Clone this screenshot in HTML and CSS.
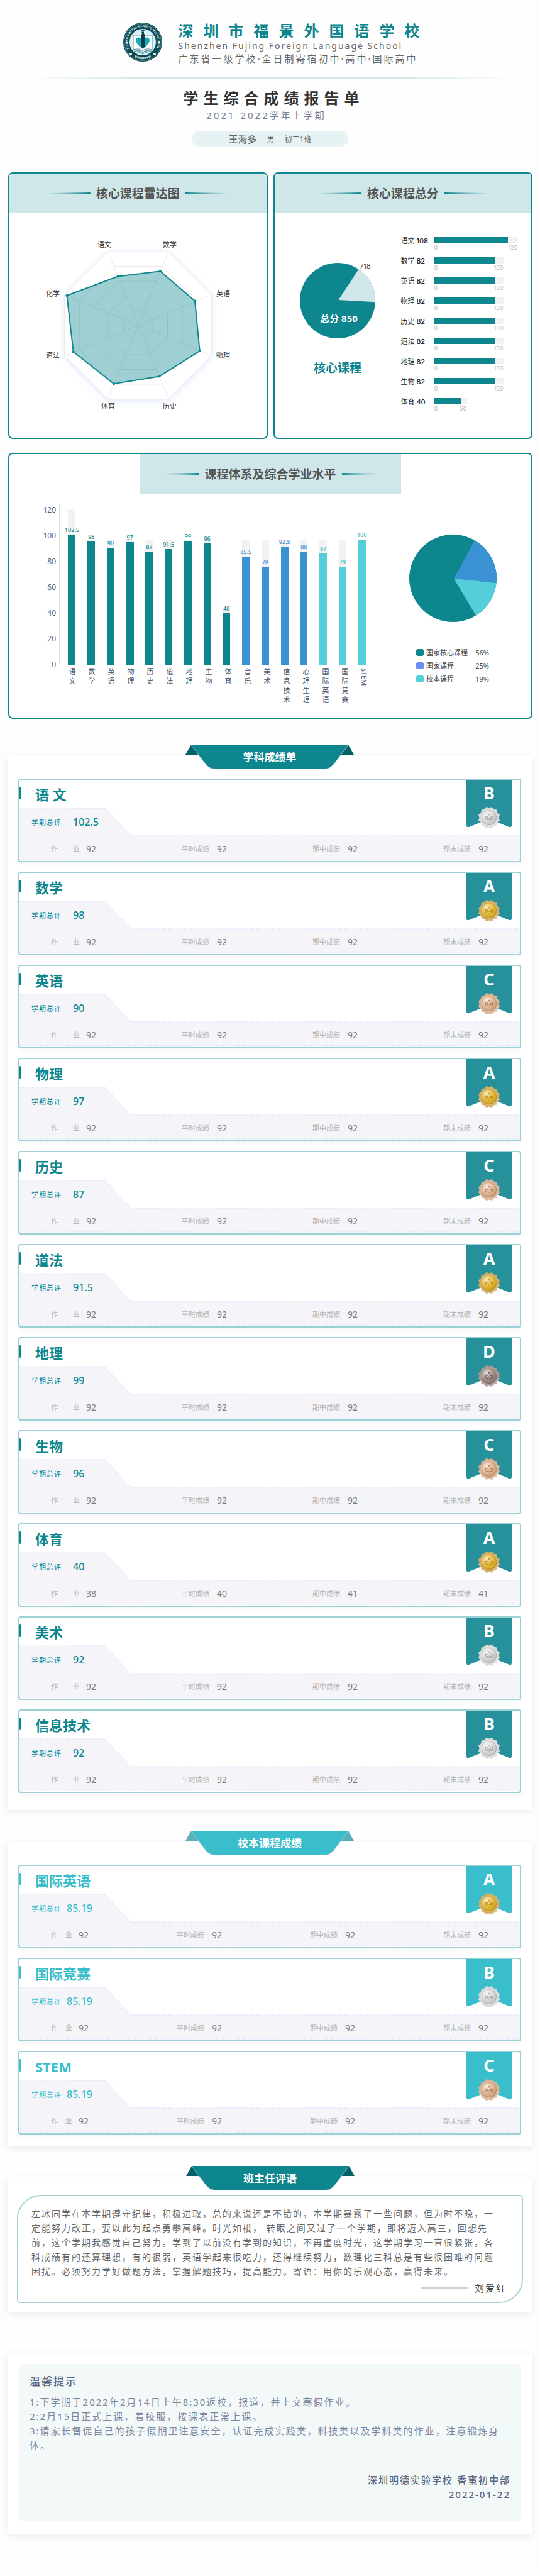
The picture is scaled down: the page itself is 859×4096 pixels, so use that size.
FILE: index.html
```html
<!DOCTYPE html>
<html lang="zh-CN">
<head>
<meta charset="utf-8">
<meta name="viewport" content="width=device-width, initial-scale=1">
<title>学生综合成绩报告单</title>
<link rel="stylesheet" href="styles.css">
</head>
<body>
<svg class="defs" width="0" height="0" aria-hidden="true">
  <defs>
    <radialGradient id="shine" cx="35%" cy="30%" r="80%">
      <stop offset="0" stop-color="#fff" stop-opacity=".75"/>
      <stop offset=".5" stop-color="#fff" stop-opacity=".15"/>
      <stop offset="1" stop-color="#000" stop-opacity=".12"/>
    </radialGradient>
    <linearGradient id="sheen" x1="0" y1="0" x2="1" y2="1">
      <stop offset="0" stop-color="#fff" stop-opacity=".1"/>
      <stop offset=".75" stop-color="#fff" stop-opacity=".15"/>
      <stop offset="1" stop-color="#fff" stop-opacity=".65"/>
    </linearGradient>
    <symbol id="ribbon" viewBox="0 0 268 40">
      <path class="ribbon-fold" d="M9 0 0 16h22zM259 0l9 16h-22z"/>
      <path class="ribbon-edge" d="M9 1 30 29Q37 39 46 39H222Q231 39 238 29L259 1z"/>
      <path class="ribbon-main" d="M9 0H259L238 28Q231 38 222 38H46Q37 38 30 28z"/>
    </symbol>
    <symbol id="flag" viewBox="0 0 72 78">
      <path class="flag-body" d="M0 0H72V72Q72 76 68 75L36 62 4 75Q0 76 0 72z"/>
    </symbol>
    <symbol id="shelf">
      <path class="s-fill" d="M0 1H136L177 45V83H0z"/>
      <rect class="s-fill" y="45" x="176" width="100%" height="38"/>
      <path class="s-dash" d="M0 1H136L177 45"/>
      <line class="s-dash" x1="177" y1="45" x2="100%" y2="45"/>
      <line class="s-dash" x1="0" y1="83" x2="100%" y2="83"/>
    </symbol>
    <symbol id="medal" viewBox="-18 -18 36 36">
      <path class="medal-rim" d="M4.500-17 7.500-13.500 12-12.500 13-7.500 17-4.500 15.400 0 17 4.500 13 7.500 12 12.500 7.500 13.500 4.500 17 0 15.400-4.500 17-7.500 13.500-12 12.500-13 7.500-17 4.500-15.400 0-17-4.500-13-7.500-12-12.500-7.500-13.500-4.500-17 0-15.400z"/>
      <path fill="url(#sheen)" d="M4.500-17 7.500-13.500 12-12.500 13-7.500 17-4.500 15.400 0 17 4.500 13 7.500 12 12.500 7.500 13.500 4.500 17 0 15.400-4.500 17-7.500 13.500-12 12.500-13 7.500-17 4.500-15.400 0-17-4.500-13-7.500-12-12.500-7.500-13.500-4.500-17 0-15.400z"/>
      <circle class="medal-ring" r="12"/>
      <circle class="medal-face" r="11"/>
      <circle fill="url(#shine)" r="12"/>
      <path class="medal-crown" d="M-6-2-3 0 0-6 3 0 6-2 5 3Q0 5-5 3zM-4 2Q0 0 4 2"/>
    </symbol>
  </defs>
</svg>

<main class="page">
  <header class="head">
    <div class="school">
      <svg class="logo" viewBox="0 0 62 62" role="img" aria-label="校徽">
        <circle cx="31" cy="31" r="31" fill="#0b4a53"/>
        <circle cx="31" cy="31" r="29.500" fill="none" stroke="#7fb4ba" stroke-width=".6"/>
        <circle cx="31" cy="31" r="21" fill="#d9f1fa"/>
        <path d="M16 20H46V44Q37 43 31 47Q25 43 16 44z" fill="#fff" stroke="#3f7f88" stroke-width=".8"/>
        <path d="M31 42Q19 33 20 27Q22 21 31 25Q40 21 42 27Q43 33 31 42z" fill="#15abb8"/>
        <path d="M16 43Q26 40 31 45Q36 40 46 43M17 46Q26 43 31 48Q36 43 45 46M20 49Q27 46 31 50Q35 46 42 49" fill="none" stroke="#4d8c95" stroke-width="1"/>
        <path d="M28 12 31 10.500 35 12 31 13.500zM29 14.500h4v3l2 3-1 4 1 13-4 4-3-4 1-13-1-4 2-3z" fill="#0a3f48"/>
        <path id="arc-top" d="M14 48A24 24 0 1 1 48 48" fill="none"/>
        <path id="arc-low" d="M14 52A27 27 0 0 0 48 52" fill="none"/>
        <text class="logo-en"><textPath href="#arc-top" startOffset="50%">FUJING FOREIGN LANGUAGE SCHOOL</textPath></text>
        <text class="logo-cn"><textPath href="#arc-low" startOffset="50%">福景外国语学校</textPath></text>
        <circle cx="12" cy="50" r="2" fill="#e8f6f8"/><circle cx="50" cy="50" r="2" fill="#e8f6f8"/>
      </svg>
      <div class="school-text">
        <p class="school-name">深圳市福景外国语学校</p>
        <p class="school-en">Shenzhen Fujing Foreign Language School</p>
        <p class="school-sub">广东省一级学校·全日制寄宿初中·高中·国际高中</p>
      </div>
    </div>
    <hr class="rule">
    <h1 class="title">学生综合成绩报告单</h1>
    <p class="term">2021-2022学年上学期</p>
    <p class="student"><strong>王海多</strong><span>男</span><span>初二1班</span></p>
  </header>

  <div class="pair">
    <section class="card">
      <h2 class="card-head">核心课程雷达图</h2>
      <svg class="radar" viewBox="0 0 408 357" role="img" aria-label="核心课程雷达图">
        <g transform="translate(204.700 178.300)">
          <polygon class="glow" points="-48,-117 48,-117 117,-48 117,48 48,117 -48,117 -117,48 -117,-48"/>
          <g class="web">
            <polygon points="-48.300,-117 48.300,-117 117,-48.300 117,48.300 48.300,117 -48.300,117 -117,48.300 -117,-48.300"/>
            <polygon points="-38.600,-93.600 38.600,-93.600 93.600,-38.600 93.600,38.600 38.600,93.600 -38.600,93.600 -93.600,38.600 -93.600,-38.600"/>
            <polygon points="-29,-70.200 29,-70.200 70.200,-29 70.200,29 29,70.200 -29,70.200 -70.200,29 -70.200,-29"/>
            <polygon points="-19.300,-46.800 19.300,-46.800 46.800,-19.300 46.800,19.300 19.300,46.800 -19.300,46.800 -46.800,19.300 -46.800,-19.300"/>
            <polygon points="-9.700,-23.400 9.700,-23.400 23.400,-9.700 23.400,9.700 9.700,23.400 -9.700,23.400 -23.400,9.700 -23.400,-9.700"/>
            <path d="M-48.300-117 48.300 117M48.300-117-48.300 117M-117-48.300 117 48.300M-117 48.300 117-48.300"/>
          </g>
          <polygon class="score-area" points="-32.300,-77.700 35.300,-86 90.300,-38.700 98,40.700 33.700,81.300 -38.700,93 -103,42 -113.300,-47.300"/>
          <g class="dots"><circle cx="-32.300" cy="-77.700" r="2"/><circle cx="35.300" cy="-86" r="2"/><circle cx="90.300" cy="-38.700" r="2"/><circle cx="98" cy="40.700" r="2"/><circle cx="33.700" cy="81.300" r="2"/><circle cx="-38.700" cy="93" r="2"/><circle cx="-103" cy="42" r="2"/><circle cx="-113.300" cy="-47.300" r="2"/></g>
        </g>
        <g class="radar-text">
          <text x="151" y="54">语文</text><text x="255" y="54">数学</text>
          <text x="340" y="132">英语</text><text x="340" y="230">物理</text>
          <text x="255" y="311">历史</text><text x="157" y="311">体育</text>
          <text x="69" y="230">道法</text><text x="69" y="132">化学</text>
        </g>
      </svg>
    </section>

    <section class="card">
      <h2 class="card-head">核心课程总分</h2>
      <div class="total">
        <div class="total-pie">
          <svg class="pie-small" viewBox="0 0 120 120" role="img" aria-label="总分 850">
            <circle cx="60" cy="60" r="60" fill="#0e868e"/>
            <path d="M61.500 59 93.500 10A60 60 0 0 1 120 62.300z" fill="#d0e7e9"/>
            <text class="pie-out" x="104" y="9">718</text>
            <text class="pie-in" x="62" y="94">总分 850</text>
          </svg>
          <p class="pie-name">核心课程</p>
        </div>
        <ul class="scores">
          <li><span class="s-name">语文 <b>108</b></span><div class="s-bar" style="width:133px"><i style="width:88%"></i><small>0</small><small>120</small></div></li>
          <li><span class="s-name">数学 <b>82</b></span><div class="s-bar" style="width:110px"><i style="width:89%"></i><small>0</small><small>100</small></div></li>
          <li><span class="s-name">英语 <b>82</b></span><div class="s-bar" style="width:110px"><i style="width:89%"></i><small>0</small><small>100</small></div></li>
          <li><span class="s-name">物理 <b>82</b></span><div class="s-bar" style="width:110px"><i style="width:89%"></i><small>0</small><small>100</small></div></li>
          <li><span class="s-name">历史 <b>82</b></span><div class="s-bar" style="width:110px"><i style="width:89%"></i><small>0</small><small>100</small></div></li>
          <li><span class="s-name">道法 <b>82</b></span><div class="s-bar" style="width:110px"><i style="width:89%"></i><small>0</small><small>100</small></div></li>
          <li><span class="s-name">地理 <b>82</b></span><div class="s-bar" style="width:110px"><i style="width:89%"></i><small>0</small><small>100</small></div></li>
          <li><span class="s-name">生物 <b>82</b></span><div class="s-bar" style="width:110px"><i style="width:89%"></i><small>0</small><small>100</small></div></li>
          <li><span class="s-name">体育 <b>40</b></span><div class="s-bar" style="width:52px"><i style="width:83%"></i><small>0</small><small>50</small></div></li>
        </ul>
      </div>
    </section>
  </div>

  <section class="card card-wide">
    <h2 class="card-head card-head-mid">课程体系及综合学业水平</h2>
    <div class="levels">
      <div class="ticks"><span>120</span><span>100</span><span>80</span><span>60</span><span>40</span><span>20</span><span>0</span></div>
      <div class="chart">
        <div class="plot">
          <div class="col"><i style="height:248px"></i><div><span>102.5</span><b style="height:207px"></b></div></div>
          <div class="col"><i style="height:199px"></i><div><span>98</span><b style="height:196px"></b></div></div>
          <div class="col"><i style="height:199px"></i><div><span>90</span><b style="height:186px"></b></div></div>
          <div class="col"><i style="height:199px"></i><div><span>97</span><b style="height:195px"></b></div></div>
          <div class="col"><i style="height:199px"></i><div><span>87</span><b style="height:180px"></b></div></div>
          <div class="col"><i style="height:199px"></i><div><span>91.5</span><b style="height:184px"></b></div></div>
          <div class="col"><i style="height:199px"></i><div><span>99</span><b style="height:197px"></b></div></div>
          <div class="col"><i style="height:199px"></i><div><span>96</span><b style="height:193px"></b></div></div>
          <div class="col"><i style="height:93px"></i><div><span>40</span><b style="height:82px"></b></div></div>
          <div class="col blue"><i style="height:199px"></i><div><span>85.5</span><b style="height:172px"></b></div></div>
          <div class="col blue"><i style="height:199px"></i><div><span>78</span><b style="height:156px"></b></div></div>
          <div class="col blue"><i style="height:199px"></i><div><span>92.5</span><b style="height:188px"></b></div></div>
          <div class="col blue"><i style="height:199px"></i><div><span>88</span><b style="height:180px"></b></div></div>
          <div class="col cyan"><i style="height:199px"></i><div><span>87</span><b style="height:177px"></b></div></div>
          <div class="col cyan"><i style="height:199px"></i><div><span>79</span><b style="height:156px"></b></div></div>
          <div class="col cyan"><i style="height:199px"></i><div><span>100</span><b style="height:199px"></b></div></div>
        </div>
        <div class="names">
          <span>语文</span><span>数学</span><span>英语</span><span>物理</span><span>历史</span><span>道法</span><span>地理</span><span>生物</span><span>体育</span><span>音乐</span><span>美术</span><span>信息技术</span><span>心理生理</span><span>国际英语</span><span>国际竞赛</span><span class="latin">STEM</span>
        </div>
      </div>
      <div class="share">
        <svg class="pie-big" viewBox="0 0 139 139" role="img" aria-label="课程占比">
          <circle cx="69.500" cy="69.500" r="69.500" fill="#0e868e"/>
          <path d="M71 70 104 9.200A69.500 69.500 0 0 1 138.700 77z" fill="#3b92d3"/>
          <path d="M71 70 138.700 77A69.500 69.500 0 0 1 106 128.600z" fill="#54cfda"/>
        </svg>
        <ul class="legend">
          <li><i></i><span>国家核心课程</span><span>56%</span></li>
          <li><i class="k-blue"></i><span>国家课程</span><span>25%</span></li>
          <li><i class="k-cyan"></i><span>校本课程</span><span>19%</span></li>
        </ul>
      </div>
    </div>
  </section>

  <section class="panel panel-first">
    <h2 class="ribbon"><svg class="ribbon-art" aria-hidden="true"><use href="#ribbon"/></svg><span>学科成绩单</span></h2>
    <div class="subjects">
      <article class="subject"><svg class="shelf" aria-hidden="true"><use href="#shelf"/></svg>
        <h3>语 文</h3><p class="overall"><span>学期总评</span><b>102.5</b></p>
        <dl><div><dt><span>作</span><span>业</span></dt><dd>92</dd></div><div><dt>平时成绩</dt><dd>92</dd></div><div><dt>期中成绩</dt><dd>92</dd></div><div><dt>期末成绩</dt><dd>92</dd></div></dl>
        <div class="grade silver"><svg class="flag" aria-hidden="true"><use href="#flag"/></svg><strong>B</strong><svg class="medal" aria-hidden="true"><use href="#medal"/></svg></div></article>
      <article class="subject"><svg class="shelf" aria-hidden="true"><use href="#shelf"/></svg>
        <h3>数学</h3><p class="overall"><span>学期总评</span><b>98</b></p>
        <dl><div><dt><span>作</span><span>业</span></dt><dd>92</dd></div><div><dt>平时成绩</dt><dd>92</dd></div><div><dt>期中成绩</dt><dd>92</dd></div><div><dt>期末成绩</dt><dd>92</dd></div></dl>
        <div class="grade gold"><svg class="flag" aria-hidden="true"><use href="#flag"/></svg><strong>A</strong><svg class="medal" aria-hidden="true"><use href="#medal"/></svg></div></article>
      <article class="subject"><svg class="shelf" aria-hidden="true"><use href="#shelf"/></svg>
        <h3>英语</h3><p class="overall"><span>学期总评</span><b>90</b></p>
        <dl><div><dt><span>作</span><span>业</span></dt><dd>92</dd></div><div><dt>平时成绩</dt><dd>92</dd></div><div><dt>期中成绩</dt><dd>92</dd></div><div><dt>期末成绩</dt><dd>92</dd></div></dl>
        <div class="grade bronze"><svg class="flag" aria-hidden="true"><use href="#flag"/></svg><strong>C</strong><svg class="medal" aria-hidden="true"><use href="#medal"/></svg></div></article>
      <article class="subject"><svg class="shelf" aria-hidden="true"><use href="#shelf"/></svg>
        <h3>物理</h3><p class="overall"><span>学期总评</span><b>97</b></p>
        <dl><div><dt><span>作</span><span>业</span></dt><dd>92</dd></div><div><dt>平时成绩</dt><dd>92</dd></div><div><dt>期中成绩</dt><dd>92</dd></div><div><dt>期末成绩</dt><dd>92</dd></div></dl>
        <div class="grade gold"><svg class="flag" aria-hidden="true"><use href="#flag"/></svg><strong>A</strong><svg class="medal" aria-hidden="true"><use href="#medal"/></svg></div></article>
      <article class="subject"><svg class="shelf" aria-hidden="true"><use href="#shelf"/></svg>
        <h3>历史</h3><p class="overall"><span>学期总评</span><b>87</b></p>
        <dl><div><dt><span>作</span><span>业</span></dt><dd>92</dd></div><div><dt>平时成绩</dt><dd>92</dd></div><div><dt>期中成绩</dt><dd>92</dd></div><div><dt>期末成绩</dt><dd>92</dd></div></dl>
        <div class="grade bronze"><svg class="flag" aria-hidden="true"><use href="#flag"/></svg><strong>C</strong><svg class="medal" aria-hidden="true"><use href="#medal"/></svg></div></article>
      <article class="subject"><svg class="shelf" aria-hidden="true"><use href="#shelf"/></svg>
        <h3>道法</h3><p class="overall"><span>学期总评</span><b>91.5</b></p>
        <dl><div><dt><span>作</span><span>业</span></dt><dd>92</dd></div><div><dt>平时成绩</dt><dd>92</dd></div><div><dt>期中成绩</dt><dd>92</dd></div><div><dt>期末成绩</dt><dd>92</dd></div></dl>
        <div class="grade gold"><svg class="flag" aria-hidden="true"><use href="#flag"/></svg><strong>A</strong><svg class="medal" aria-hidden="true"><use href="#medal"/></svg></div></article>
      <article class="subject"><svg class="shelf" aria-hidden="true"><use href="#shelf"/></svg>
        <h3>地理</h3><p class="overall"><span>学期总评</span><b>99</b></p>
        <dl><div><dt><span>作</span><span>业</span></dt><dd>92</dd></div><div><dt>平时成绩</dt><dd>92</dd></div><div><dt>期中成绩</dt><dd>92</dd></div><div><dt>期末成绩</dt><dd>92</dd></div></dl>
        <div class="grade iron"><svg class="flag" aria-hidden="true"><use href="#flag"/></svg><strong>D</strong><svg class="medal" aria-hidden="true"><use href="#medal"/></svg></div></article>
      <article class="subject"><svg class="shelf" aria-hidden="true"><use href="#shelf"/></svg>
        <h3>生物</h3><p class="overall"><span>学期总评</span><b>96</b></p>
        <dl><div><dt><span>作</span><span>业</span></dt><dd>92</dd></div><div><dt>平时成绩</dt><dd>92</dd></div><div><dt>期中成绩</dt><dd>92</dd></div><div><dt>期末成绩</dt><dd>92</dd></div></dl>
        <div class="grade bronze"><svg class="flag" aria-hidden="true"><use href="#flag"/></svg><strong>C</strong><svg class="medal" aria-hidden="true"><use href="#medal"/></svg></div></article>
      <article class="subject"><svg class="shelf" aria-hidden="true"><use href="#shelf"/></svg>
        <h3>体育</h3><p class="overall"><span>学期总评</span><b>40</b></p>
        <dl><div><dt><span>作</span><span>业</span></dt><dd>38</dd></div><div><dt>平时成绩</dt><dd>40</dd></div><div><dt>期中成绩</dt><dd>41</dd></div><div><dt>期末成绩</dt><dd>41</dd></div></dl>
        <div class="grade gold"><svg class="flag" aria-hidden="true"><use href="#flag"/></svg><strong>A</strong><svg class="medal" aria-hidden="true"><use href="#medal"/></svg></div></article>
      <article class="subject"><svg class="shelf" aria-hidden="true"><use href="#shelf"/></svg>
        <h3>美术</h3><p class="overall"><span>学期总评</span><b>92</b></p>
        <dl><div><dt><span>作</span><span>业</span></dt><dd>92</dd></div><div><dt>平时成绩</dt><dd>92</dd></div><div><dt>期中成绩</dt><dd>92</dd></div><div><dt>期末成绩</dt><dd>92</dd></div></dl>
        <div class="grade silver"><svg class="flag" aria-hidden="true"><use href="#flag"/></svg><strong>B</strong><svg class="medal" aria-hidden="true"><use href="#medal"/></svg></div></article>
      <article class="subject"><svg class="shelf" aria-hidden="true"><use href="#shelf"/></svg>
        <h3>信息技术</h3><p class="overall"><span>学期总评</span><b>92</b></p>
        <dl><div><dt><span>作</span><span>业</span></dt><dd>92</dd></div><div><dt>平时成绩</dt><dd>92</dd></div><div><dt>期中成绩</dt><dd>92</dd></div><div><dt>期末成绩</dt><dd>92</dd></div></dl>
        <div class="grade silver"><svg class="flag" aria-hidden="true"><use href="#flag"/></svg><strong>B</strong><svg class="medal" aria-hidden="true"><use href="#medal"/></svg></div></article>
    </div>
  </section>

  <section class="panel panel-school">
    <h2 class="ribbon"><svg class="ribbon-art" aria-hidden="true"><use href="#ribbon"/></svg><span>校本课程成绩</span></h2>
    <div class="subjects">
      <article class="subject"><svg class="shelf" aria-hidden="true"><use href="#shelf"/></svg>
        <h3>国际英语</h3><p class="overall"><span>学期总评</span><b>85.19</b></p>
        <dl><div><dt><span>作</span><span>业</span></dt><dd>92</dd></div><div><dt>平时成绩</dt><dd>92</dd></div><div><dt>期中成绩</dt><dd>92</dd></div><div><dt>期末成绩</dt><dd>92</dd></div></dl>
        <div class="grade gold"><svg class="flag" aria-hidden="true"><use href="#flag"/></svg><strong>A</strong><svg class="medal" aria-hidden="true"><use href="#medal"/></svg></div></article>
      <article class="subject"><svg class="shelf" aria-hidden="true"><use href="#shelf"/></svg>
        <h3>国际竞赛</h3><p class="overall"><span>学期总评</span><b>85.19</b></p>
        <dl><div><dt><span>作</span><span>业</span></dt><dd>92</dd></div><div><dt>平时成绩</dt><dd>92</dd></div><div><dt>期中成绩</dt><dd>92</dd></div><div><dt>期末成绩</dt><dd>92</dd></div></dl>
        <div class="grade silver"><svg class="flag" aria-hidden="true"><use href="#flag"/></svg><strong>B</strong><svg class="medal" aria-hidden="true"><use href="#medal"/></svg></div></article>
      <article class="subject"><svg class="shelf" aria-hidden="true"><use href="#shelf"/></svg>
        <h3>STEM</h3><p class="overall"><span>学期总评</span><b>85.19</b></p>
        <dl><div><dt><span>作</span><span>业</span></dt><dd>92</dd></div><div><dt>平时成绩</dt><dd>92</dd></div><div><dt>期中成绩</dt><dd>92</dd></div><div><dt>期末成绩</dt><dd>92</dd></div></dl>
        <div class="grade bronze"><svg class="flag" aria-hidden="true"><use href="#flag"/></svg><strong>C</strong><svg class="medal" aria-hidden="true"><use href="#medal"/></svg></div></article>
    </div>
  </section>

  <section class="panel panel-remark">
    <h2 class="ribbon"><svg class="ribbon-art" aria-hidden="true"><use href="#ribbon"/></svg><span>班主任评语</span></h2>
    <div class="remark">
      <p>左冰同学在本学期遵守纪律，积极进取，总的来说还是不错的，本学期暴露了一些问题，但为时不晚，一<br>定能努力改正，要以此为起点勇攀高峰。时光如梭， 转眼之间又过了一个学期，即将迈入高三，回想先<br>前，这个学期我感觉自己努力。学到了以前没有学到的知识，不再虚度时光，这学期学习一直很紧张，各<br>科成绩有的还算理想，有的很弱，英语学起来很吃力，还得继续努力，数理化三科总是有些很困难的问题<br>困扰。必须努力学好做题方法，掌握解题技巧，提高能力。寄语：用你的乐观心态，赢得未来。</p>
      <p class="signed">刘爱红</p>
    </div>
  </section>

  <section class="panel panel-tips">
    <div class="tips">
      <h2>温馨提示</h2>
      <p>1:下学期于2022年2月14日上午8:30返校，报道，并上交寒假作业。</p>
      <p>2:2月15日正式上课，着校服，按课表正常上课。</p>
      <p>3:请家长督促自己的孩子假期里注意安全，认证完成实践类，科技类以及学科类的作业，注意锻炼身体。</p>
      <div class="issuer"><p>深圳明德实验学校 香蜜初中部</p><p>2022-01-22</p></div>
    </div>
  </section>
</main>
</body>
</html>
```
FILE: styles.css
```css
:root {
  --teal: #0e868e;
  --blue: #3b92d3;
  --cyan: #54cfda;
  --pale: #d0e7e9;
  --track: #f2f2f2;
  --accent: #0e868e;
  --flag: #26919a;
  --fold: #055f66;
}
* { box-sizing: border-box; }
body {
  margin: 0;
  background: #fff;
  color: #666;
  font-family: "Noto Sans", "Noto Sans CJK SC", sans-serif;
}
h1, h2, h3, p, ul, dl, dd { margin: 0; padding: 0; }
ul { list-style: none; }
svg { display: block; }
.defs { position: absolute; }
.page {
  margin: 0 2px;
  padding: 36px 9px 64px;
  border: 1px solid #fafafa;
  border-top: 0;
  border-radius: 0 0 8px 8px;
  background: #fefefe;
}

/* header */
.head { display: flex; flex-direction: column; align-items: center; }
.school { display: flex; gap: 26px; padding-left: 20px; }
.logo { width: 62px; height: 62px; }
.logo-en, .logo-cn { fill: #fff; text-anchor: middle; font-weight: 700; }
.logo-en { font-family: "Liberation Serif", serif; font-size: 5px; }
.logo-cn { font-size: 4px; }
.school-text { white-space: nowrap; }
.school-name { color: var(--teal); font-size: 24px; font-weight: 700; line-height: 26px; letter-spacing: 16px; }
.school-en { font-size: 14px; line-height: 22px; letter-spacing: 2px; }
.school-sub { font-size: 15px; line-height: 18px; letter-spacing: 3px; }
.rule {
  width: 95%; height: 2px; margin: 21px 0 0; border: 0;
  background: linear-gradient(90deg, #fff, var(--pale) 25%, var(--pale) 75%, #fff);
}
.title { margin-top: 14px; padding-left: 12px; color: #333; font-size: 24px; line-height: 34px; letter-spacing: 8px; }
.term { color: #75809a; font-size: 15px; line-height: 20px; letter-spacing: 3px; padding-right: 12px; }
.student {
  display: flex; justify-content: center; align-items: center; gap: 16px;
  width: 249px; height: 25px; margin-top: 15px; border-radius: 13px;
  background: #e7f2f4; font-size: 12px;
}
.student strong { font-size: 15px; font-weight: 500; }

/* chart cards */
.pair { display: grid; grid-template-columns: 1fr 1fr; gap: 9px; margin: 41px 0 22px; }
.pair, .card-wide { margin-left: 1px; }
.card { display: flex; flex-direction: column; min-height: 423px; border: 2px solid var(--teal); border-radius: 7px; background: #fff; overflow: hidden; }
.card-head {
  display: flex; justify-content: center; align-items: center; gap: 9px;
  height: 63px; background: var(--pale); color: #555; font-size: 19px; font-weight: 700; line-height: 24px;
}
.card-head::before, .card-head::after {
  content: ""; width: 70px; height: 3px;
  background: linear-gradient(90deg, transparent, var(--teal));
  clip-path: polygon(0 1px, 100% 0, 100% 100%, 0 2px);
}
.card-head::after { background: linear-gradient(270deg, transparent, var(--teal)); clip-path: polygon(0 0, 100% 1px, 100% 2px, 0 100%); }
.card-head-mid { align-self: center; width: 50%; min-width: 413px; }

.radar { width: 408px; max-width: 100%; margin: 0 auto; }
.glow { fill: #fff; filter: drop-shadow(0 2px 6px #dbe6fb); }
.web { fill: none; stroke: #e8e8e8; stroke-width: 1; }
.score-area { fill: rgba(14, 134, 142, .4); stroke: var(--teal); stroke-width: 2; }
.dots { fill: var(--teal); }
.radar-text { fill: #333; font-size: 11px; text-anchor: middle; }

.total { display: grid; grid-template-columns: 201px 1fr; padding-top: 38px; }
.total-pie { display: flex; flex-direction: column; align-items: center; padding-top: 41px; }
.pie-small { width: 120px; height: 120px; overflow: visible; }
.pie-small text { text-anchor: middle; }
.pie-out { fill: #444; font-size: 11px; font-family: Inter, sans-serif; }
.pie-in { fill: #fff; font-size: 15px; font-weight: 700; }
.pie-name { margin-top: 34px; color: var(--teal); font-size: 19px; font-weight: 700; line-height: 26px; }
.scores li { display: grid; grid-template-columns: 53px 1fr; height: 32px; align-items: start; }
.s-name { color: #222; font-size: 11px; line-height: 12px; white-space: nowrap; }
.s-name b { font-family: Inter, sans-serif; font-weight: 500; }
.s-bar { display: flex; flex-wrap: wrap; justify-content: space-between; background: linear-gradient(var(--track), var(--track)) top / 100% 10px no-repeat; }
.s-bar i { height: 10px; margin-right: auto; background: var(--teal); }
.s-bar small { color: #b8b8b8; font-family: Inter, sans-serif; font-size: 9px; line-height: 13px; }
.s-bar i + small { flex: 1; min-width: 30%; }

.levels { display: grid; grid-template-columns: 74px 506px 1fr; padding-top: 5px; }
.ticks { display: flex; flex-direction: column; text-align: right; color: #5a6478; font-size: 12px; line-height: 41px; }
.chart { padding: 11px 0 0 5px; }
.plot { display: flex; height: 257px; padding: 0 4px; border-left: 1px solid #ddd; border-bottom: 1px solid #e8e8e8; }
.col { display: grid; flex: 1; align-items: end; justify-items: center; color: var(--teal); }
.col > * { grid-area: 1 / 1; }
.col i { width: 12px; background: var(--track); }
.col div { display: flex; flex-direction: column; align-items: center; }
.col b { width: 12px; background: var(--teal); }
.col span { font-size: 9px; font-weight: 500; line-height: 14px; }
.blue { color: var(--blue); }
.blue b { background: var(--blue); }
.cyan { color: #2fb8c4; }
.cyan b { background: var(--cyan); }
.names { display: flex; padding: 4px 4px 0 5px; }
.names span { display: flex; align-items: center; flex: 1; writing-mode: vertical-rl; justify-content: flex-start; font-size: 11px; line-height: 31px; letter-spacing: 4px; color: #44506b; white-space: nowrap; }
.names .latin { letter-spacing: 0; }
.share { display: flex; flex-direction: column; align-items: center; padding-top: 60px; }
.pie-big { width: 139px; height: 139px; }
.legend { margin-top: 38px; color: #444; font-size: 11px; line-height: 21px; }
.legend li { display: grid; grid-template-columns: 12px 70px 26px; gap: 4px; align-items: center; }
.legend i { height: 11px; border-radius: 3px; background: var(--teal); }
.legend .k-blue { background: #6b8ff0; }
.legend .k-cyan { background: var(--cyan); }
.legend li span:last-child { text-align: right; }

/* panels */
.panel { display: flex; flex-direction: column; background: #fff; box-shadow: 0 3px 12px rgba(0, 0, 0, .08); padding: 0 18px 27px 17px; }
.panel-first { margin-top: 59px; }
.panel-school { margin-top: 51px; padding-bottom: 19px; --accent: #3abecc; --flag: #3abecc; --fold: #5ab0b8; }
.panel-remark { margin-top: 49px; padding: 0 15px 15px; }
.panel-tips { margin-top: 64px; padding: 18px 18px 21px; }
.ribbon {
  position: relative; align-self: center; width: 268px; height: 38px; margin: -18px 0 16px;
  text-align: center; color: #fff; font-size: 17px; font-weight: 700; line-height: 40px;
}
.panel-remark .ribbon { margin-bottom: 8px; }
.ribbon-art { position: absolute; inset: 0; width: 268px; height: 40px; }
.ribbon span { position: relative; }
.ribbon-fold { fill: var(--fold); }
.ribbon-edge { fill: #b9cfe4; }
.ribbon-main { fill: var(--accent); }

/* subject rows */
.subjects { display: flex; flex-direction: column; gap: 15px; }
.subject {
  position: relative; min-height: 133px; padding: 11px 50px 0 25px;
  border: 2px solid #9bd0d4; border-radius: 4px; background: #fff; box-shadow: 0 4px 10px rgba(0, 0, 0, .04);
}
.subject::before { content: ""; position: absolute; left: 0; top: 11px; width: 3px; height: 20px; border-radius: 0 3px 3px 0; background: var(--accent); }
.subject > h3, .subject > p, .subject > dl { position: relative; }
.shelf { position: absolute; left: 0; top: 44px; width: 100%; height: 85px; }
.s-fill { fill: #f4f4f9; }
.s-dash { fill: none; stroke: #e6e9fb; stroke-width: 2; stroke-dasharray: 2 2; }
.subject h3 { color: var(--accent); font-size: 22px; font-weight: 700; line-height: 24px; }
.overall { display: flex; align-items: center; gap: 18px; height: 24px; margin: 20px 0 0 -6px; color: var(--accent); }
.overall span { font-size: 11px; letter-spacing: 1px; }
.overall b { font-size: 16px; font-weight: 500; }
.panel-school .overall { gap: 8px; }
.subject dl { display: flex; justify-content: space-between; margin: 18px 0 0 25px; }
.subject dl div { display: flex; align-items: center; gap: 10px; height: 24px; }
.subject dt { display: flex; justify-content: space-between; width: 46px; color: #b3b3b3; font-size: 11px; }
.panel-school dl div:first-child dt { width: 34px; }
.subject dd { font-size: 14px; color: #7c7c7c; }
.grade { position: absolute; right: 13px; top: 0; display: flex; flex-direction: column; align-items: center; width: 72px; height: 78px; }
.flag { position: absolute; inset: 0; width: 72px; height: 78px; }
.flag-body { fill: var(--flag); }
.grade strong { position: relative; color: #fff; font-size: 27px; line-height: 41px; }
.medal { position: relative; width: 36px; height: 36px; margin-top: 1px; }
.medal-rim { fill: var(--rim); }
.medal-ring { fill: var(--ring); }
.medal-face { fill: var(--face); }
.medal-crown { fill: none; stroke: var(--crown); stroke-width: 1; }
.silver { --rim: #d6d6d6; --ring: #bcbcba; --face: #d6d6d4; --crown: #a6a6a2; }
.gold { --rim: #d0a452; --ring: #c99a35; --face: #e3b21c; --crown: #b88a14; }
.bronze { --rim: #d6aa88; --ring: #c4946e; --face: #dfad85; --crown: #b07c58; }
.iron { --rim: #a28b83; --ring: #84706a; --face: #978079; --crown: #665450; }

/* remark */
.remark { padding: 16px 20px 7px 21px; border: 2px solid #a6d1d4; border-radius: 38px 5px; font-size: 14px; line-height: 23px; letter-spacing: 2px; }
.signed { display: flex; justify-content: flex-end; align-items: center; gap: 10px; padding-right: 4px; color: #444; font-size: 15px; line-height: 30px; }
.signed::before { content: ""; width: 76px; height: 2px; background: #d0d0d0; }

/* tips */
.tips { padding: 16px 17px 31px; border-radius: 7px; background: #f3f8f9; color: #7b87a0; font-size: 15px; line-height: 23px; letter-spacing: 2px; }
.tips h2 { margin-bottom: 9px; color: #5b6780; font-size: 17px; font-weight: 500; line-height: 24px; }
.issuer { margin-top: 32px; text-align: right; color: #5b6780; font-weight: 500; }
```
